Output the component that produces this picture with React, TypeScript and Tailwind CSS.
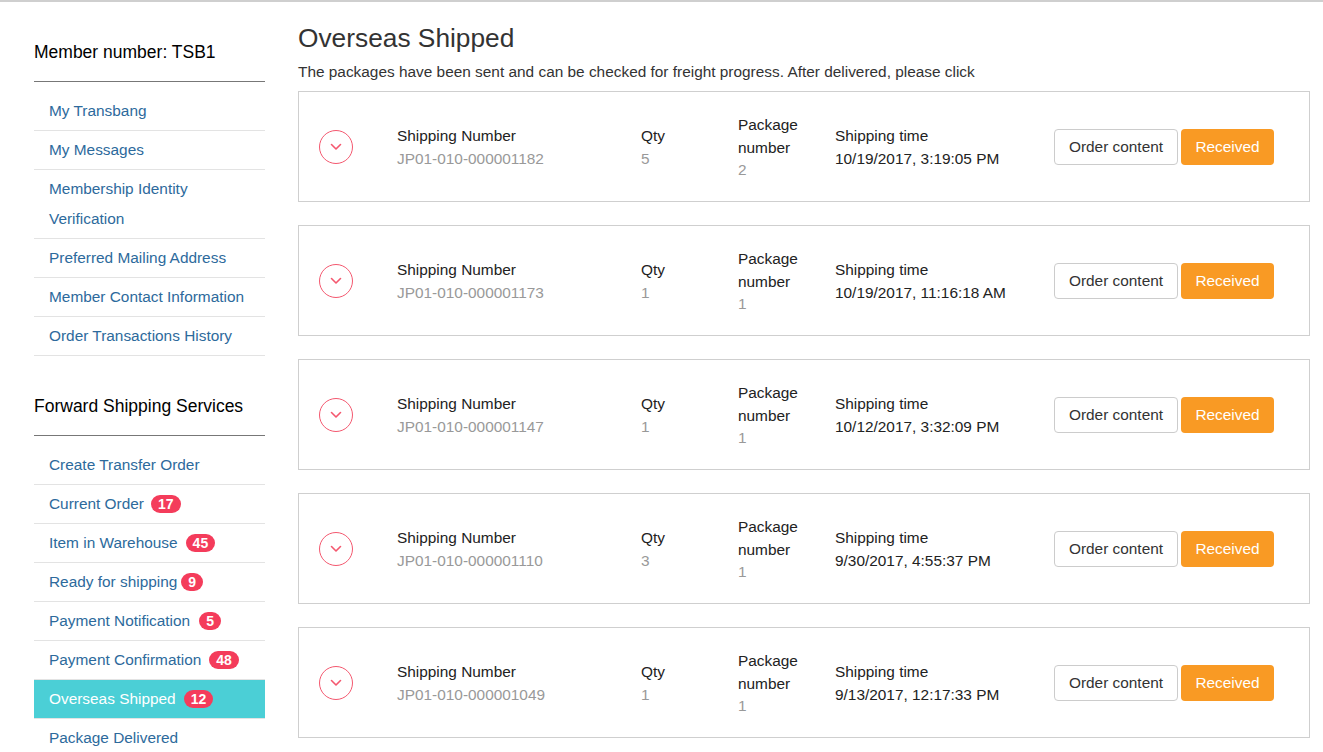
import React from "react";

type Item = { label: string; badge?: number; gap?: string; active?: boolean; multi?: boolean };

const section1: Item[] = [
  { label: "My Transbang" },
  { label: "My Messages" },
  { label: "Membership Identity Verification", multi: true },
  { label: "Preferred Mailing Address" },
  { label: "Member Contact Information" },
  { label: "Order Transactions History" },
];

const section2: Item[] = [
  { label: "Create Transfer Order" },
  { label: "Current Order", badge: 17, gap: "ml-[7px]" },
  { label: "Item in Warehouse", badge: 45, gap: "ml-[8px]" },
  { label: "Ready for shipping", badge: 9, gap: "ml-[4px]" },
  { label: "Payment Notification", badge: 5, gap: "ml-[9px]" },
  { label: "Payment Confirmation", badge: 48, gap: "ml-[8px]" },
  { label: "Overseas Shipped", badge: 12, gap: "ml-[8px]", active: true },
  { label: "Package Delivered" },
];

const orders = [
  { no: "JP01-010-000001182", qty: 5, pkg: 2, time: "10/19/2017, 3:19:05 PM" },
  { no: "JP01-010-000001173", qty: 1, pkg: 1, time: "10/19/2017, 11:16:18 AM" },
  { no: "JP01-010-000001147", qty: 1, pkg: 1, time: "10/12/2017, 3:32:09 PM" },
  { no: "JP01-010-000001110", qty: 3, pkg: 1, time: "9/30/2017, 4:55:37 PM" },
  { no: "JP01-010-000001049", qty: 1, pkg: 1, time: "9/13/2017, 12:17:33 PM" },
];

function Section({ title, items, top, headPad }: { title: string; items: Item[]; top: string; headPad: string }) {
  return (
    <div className={top}>
      <div className={"text-[17.5px] leading-[24px] text-black border-b border-[#777] " + headPad}>{title}</div>
      <ul className="mt-[10px]">
        {items.map((it) => (
          <li
            key={it.label}
            className={
              "px-[15px] py-[4px] text-[15.4px] leading-[30px] border-b border-[#e3e3e3] " +
              (it.active ? "bg-[#4bcfd6] text-white" : "text-[#2d6a9c]")
            }
          >
            <span className={it.multi ? "block w-[150px]" : ""}>{it.label}</span>
            {it.badge !== undefined && (
              <span
                className={
                  "inline-block align-middle relative top-[-1px] h-[18px] leading-[18px] px-[7px] rounded-full bg-[#f43c5b] text-white text-[14px] font-bold " +
                  it.gap
                }
              >
                {it.badge}
              </span>
            )}
          </li>
        ))}
      </ul>
    </div>
  );
}

function ChevronCircle() {
  return (
    <div className="w-[34px] h-[34px] rounded-full border-[1.5px] border-[#f4586f] flex items-center justify-center">
      <svg width="12" height="8" viewBox="0 0 12 8" className="mt-[1px]">
        <polyline points="1.5,1.5 6,6 10.5,1.5" fill="none" stroke="#f4586f" strokeWidth="1.6" strokeLinecap="round" strokeLinejoin="round" />
      </svg>
    </div>
  );
}

export default function App() {
  return (
    <div
      className="min-h-[752px] border-t-2 border-[#cfcfcf] bg-white flex pl-[34px] pr-[13px]"
      style={{ fontFamily: '"Liberation Sans", Arial, sans-serif' }}
    >
      <aside className="w-[231px] shrink-0">
        <Section title="Member number: TSB1" items={section1} top="pt-[38px]" headPad="pb-[17px]" />
        <Section title="Forward Shipping Services" items={section2} top="pt-[38px]" headPad="pb-[17px]" />
      </aside>
      <main className="flex-1 ml-[33px]">
        <h1 className="mt-[21px] text-[26.3px] leading-[30px] text-[#333]">Overseas Shipped</h1>
        <p className="mt-[8px] text-[15.4px] leading-[22px] text-[#333]">
          The packages have been sent and can be checked for freight progress. After delivered, please click
        </p>
        <div className="mt-[8px]">
          {orders.map((o) => (
            <div key={o.no} className="h-[111px] mb-[23px] border border-[#cfcfcf] flex items-center text-[15.4px] leading-[22.5px]">
              <div className="w-[98px] shrink-0 pl-[20px]">
                <ChevronCircle />
              </div>
              <div className="w-[244px] shrink-0 mt-[2px]">
                <div className="text-[#222]">Shipping Number</div>
                <div className="text-[#999]">{o.no}</div>
              </div>
              <div className="w-[97px] shrink-0 mt-[2px]">
                <div className="text-[#222]">Qty</div>
                <div className="text-[#999]">{o.qty}</div>
              </div>
              <div className="w-[97px] shrink-0 pr-[10px] mt-[3px]">
                <div className="text-[#222]">Package number</div>
                <div className="text-[#999]">{o.pkg}</div>
              </div>
              <div className="w-[219px] shrink-0 mt-[2px]">
                <div className="text-[#222]">Shipping time</div>
                <div className="text-[#222]">{o.time}</div>
              </div>
              <div className="flex gap-[3px] mt-[1px]">
                <button className="h-[36px] w-[124px] border border-[#ccc] rounded-[4px] bg-white text-[#333] text-[15.4px]">
                  Order content
                </button>
                <button className="h-[36px] w-[93px] rounded-[4px] bg-[#f99a24] text-white text-[15.4px]">
                  Received
                </button>
              </div>
            </div>
          ))}
        </div>
      </main>
    </div>
  );
}
